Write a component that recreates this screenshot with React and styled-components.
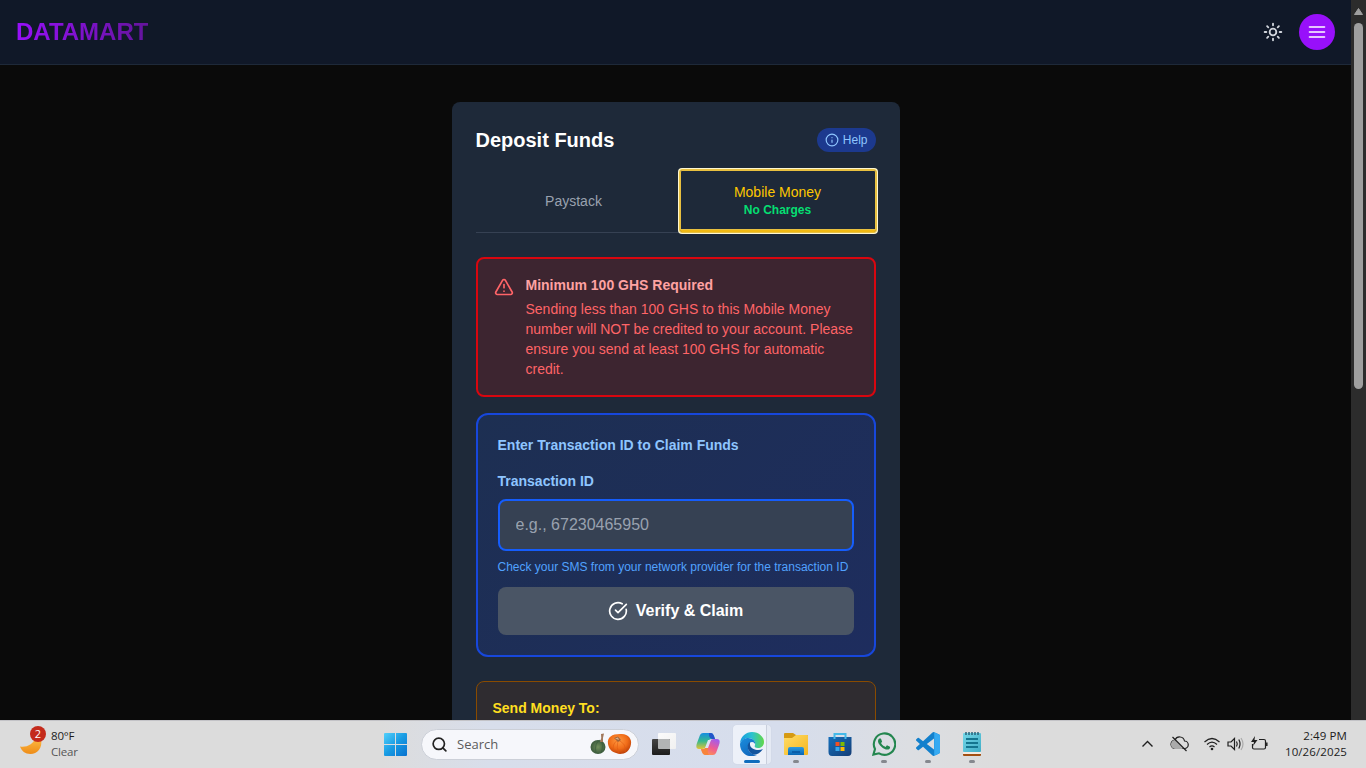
import React from 'react';
import styled, { createGlobalStyle } from 'styled-components';
import { Sun, Info, TriangleAlert, CircleCheckBig, Search } from 'lucide-react';

const GlobalStyle = createGlobalStyle`
  *, *::before, *::after { box-sizing: border-box; }
  body { margin: 0; overflow: hidden; background: #0a0a0a; font-family: "Liberation Sans", Arial, sans-serif; }
  h1, h2, h3, p { margin: 0; }
  button, input { font-family: inherit; }
`;

const Desktop = styled.div`
  display: flex;
  flex-direction: column;
  width: 1366px;
  height: 768px;
`;

const BrowserView = styled.div`
  display: flex;
  height: 720px;
  overflow: hidden;
`;

const Page = styled.div`
  width: 1351px;
  height: 720px;
  overflow: hidden;
  background: #0a0a0a;
`;

const Header = styled.header`
  display: flex;
  align-items: center;
  justify-content: space-between;
  height: 65px;
  padding: 0 16px;
  background: #101828;
  border-bottom: 1px solid #1e2939;
`;

const Brand = styled.h1`
  font-size: 24px;
  line-height: 32px;
  font-weight: 700;
  color: transparent;
  background: linear-gradient(90deg, #9810fa, #64149c);
  background-clip: text;
`;

const HeaderActions = styled.div`
  display: flex;
  align-items: center;
  gap: 16px;
`;

const ThemeToggle = styled.button`
  display: flex;
  padding: 0;
  border: 0;
  background: none;
  color: #d1d5dc;
`;

const MenuButton = styled.button`
  display: flex;
  align-items: center;
  justify-content: center;
  width: 36px;
  height: 36px;
  padding: 0;
  border: 0;
  border-radius: 50%;
  background: #9810fa;
  color: #fff;
`;

const ScrollTrack = styled.div`
  display: flex;
  flex-direction: column;
  align-items: center;
  width: 15px;
  height: 720px;
  padding-top: 8px;
  background: #2c2c2c;
`;

const ScrollThumb = styled.div`
  width: 9px;
  height: 366px;
  margin-top: 8px;
  border-radius: 5px;
  background: #9f9f9f;
`;

const Card = styled.main`
  width: 448px;
  height: 800px;
  margin: 37px auto 0;
  padding: 24px;
  border-radius: 8px;
  background: #1e2939;
`;

const CardHeader = styled.div`
  display: flex;
  align-items: center;
  justify-content: space-between;
  height: 28px;
  margin-bottom: 16px;
`;

const CardTitle = styled.h2`
  font-size: 20px;
  line-height: 28px;
  font-weight: 700;
  color: #fff;
`;

const HelpButton = styled.button`
  display: flex;
  align-items: center;
  gap: 4px;
  height: 24px;
  padding: 0 8px;
  border: 0;
  border-radius: 12px;
  background: #1c398e;
  color: #8ec5ff;
  font-size: 12px;
  line-height: 16px;
`;

const Tabs = styled.div`
  display: flex;
  gap: 8px;
  height: 63px;
  margin-bottom: 24px;
  border-bottom: 1px solid #364153;
`;

const Tab = styled.button`
  display: flex;
  flex: 1;
  flex-direction: column;
  align-items: center;
  justify-content: center;
  padding: 0;
  border: 0;
  border-bottom: ${(p) => (p.$active ? '2px solid #f0b913' : '0')};
  border-radius: ${(p) => (p.$active ? '2px' : '0')};
  outline: ${(p) => (p.$active ? '1px solid #e8c040' : 'none')};
  box-shadow: ${(p) => (p.$active ? '0 0 0 2px #fff7cf, inset 0 0 0 1px #e8c040' : 'none')};
  background: none;
  color: ${(p) => (p.$active ? '#fdc700' : '#99a1af')};
  font-size: 14px;
  line-height: 20px;
`;

const TabNote = styled.span`
  color: #05df72;
  font-size: 12px;
  line-height: 16px;
  font-weight: 700;
`;

const Alert = styled.section`
  display: flex;
  gap: 12px;
  height: 140px;
  margin-bottom: 16px;
  padding: 16px;
  border: 2px solid #d9060f;
  border-radius: 8px;
  background: #3d2530;
  color: #ff6467;
  font-size: 14px;
  line-height: 20px;
  svg { flex: none; margin-top: 2px; }
`;

const AlertTitle = styled.h3`
  margin-bottom: 4px;
  font-size: 14px;
  font-weight: 700;
  color: #ffa2a2;
`;

const ClaimPanel = styled.section`
  display: flex;
  flex-direction: column;
  height: 244px;
  margin-bottom: 24px;
  padding: 20px;
  border: 2px solid #1747dc;
  border-radius: 12px;
  background: linear-gradient(135deg, #1d2f52, #1e2d5e);
`;

const PanelTitle = styled.h3`
  font-size: 14px;
  line-height: 20px;
  font-weight: 700;
  color: ${(p) => p.$color};
`;

const FieldLabel = styled.label`
  margin: 16px 0 8px;
  font-size: 14px;
  line-height: 20px;
  font-weight: 700;
  color: #8ec5ff;
`;

const TextField = styled.input`
  width: 100%;
  height: 52px;
  padding: 0 16px;
  border: 2px solid #155dfc;
  border-radius: 8px;
  background: #364153;
  color: #fff;
  font-size: 16px;
  &::placeholder { color: #99a1af; opacity: 1; }
`;

const Hint = styled.p`
  margin: 8px 0 12px;
  font-size: 12px;
  line-height: 16px;
  color: #51a2ff;
  white-space: nowrap;
`;

const ClaimButton = styled.button`
  display: flex;
  align-items: center;
  justify-content: center;
  gap: 8px;
  height: 48px;
  border: 0;
  border-radius: 8px;
  background: #4a5565;
  color: #fff;
  font-size: 16px;
  font-weight: 700;
`;

const SendPanel = styled.section`
  height: 200px;
  padding: 16px;
  border: 1px solid #894b00;
  border-radius: 8px;
  background: #2f2c30;
`;

const Taskbar = styled.footer`
  display: grid;
  grid-template-columns: 375px 1fr 351px;
  height: 48px;
  border-top: 1px solid #c3c3c7;
  background: linear-gradient(90deg, #dcdcdc 0, #dcdcdc 380px, #d8deeb 490px, #d6ddec 780px, #dcdee2 910px, #dcdcdc 1000px);
  color: #1b1b1b;
  font-family: "Open Sans", "Noto Sans", sans-serif;
`;

const Weather = styled.div`
  display: flex;
  padding: 5px 0 0 19px;
  gap: 4px;
`;

const WeatherText = styled.div`
  padding-top: 2px;
  font-size: 11.5px;
  line-height: 16px;
  letter-spacing: -0.2px;
  span { display: block; color: #555; }
`;

const AppRow = styled.div`
  display: flex;
  align-items: flex-start;
`;

const StartButton = styled.div`
  width: 46px;
  padding: 12px 0 0 9px;
`;

const SearchBox = styled.div`
  display: flex;
  align-items: center;
  width: 218px;
  height: 31px;
  margin: 8px 6px 0 0;
  padding: 0 6px 0 9px;
  border: 1px solid #ccd0d8;
  border-radius: 16px;
  background: #f6f7fb;
  color: #222;
  font-size: 13px;
`;

const SearchText = styled.span`
  flex: 1;
  padding: 0 0 2px 9px;
  color: #5c5c5c;
`;

const AppSlot = styled.div`
  display: flex;
  flex-direction: column;
  align-items: center;
  width: 38px;
  height: 39px;
  margin: 4px 6px 0 0;
  padding-top: 7px;
  border-radius: 4px;
  background: ${(p) => (p.$active ? 'linear-gradient(90deg, #edf1f9 33px, #c9cfdc 33px, #c9cfdc 34px, #e5eaf4 34px)' : 'transparent')};
  box-shadow: ${(p) => (p.$active ? '0 0 1px #b9c1d0' : 'none')};
  svg { flex: none; }
`;

const RunMark = styled.span`
  width: ${(p) => (p.$active ? 16 : 6)}px;
  height: 3px;
  margin-top: 4px;
  border-radius: 2px;
  background: ${(p) => (p.$active ? '#0f6cbd' : '#85888e')};
`;

const Tray = styled.div`
  display: flex;
  justify-content: flex-end;
  gap: 13px;
  padding: 6px 19px 0 0;
`;

const Clock = styled.div`
  width: 66px;
  text-align: right;
  white-space: nowrap;
  font-size: 11.5px;
  line-height: 16px;
  letter-spacing: 0.1px;
  padding-top: 1px;
`;

const MenuIcon = () => (
  <svg width="20" height="20" viewBox="0 0 24 24" fill="none" stroke="currentColor" strokeWidth="2" strokeLinecap="round">
    <path d="M3 12H21M3 6H21M3 18H21" />
  </svg>
);

const MoonIcon = () => (
  <svg width="28" height="32" viewBox="0 0 28 32">
    <defs>
      <linearGradient id="moon" x1="0" y1="0" x2="0" y2="1">
        <stop offset="0" stopColor="#ffc14a" />
        <stop offset="1" stopColor="#ee8c18" />
      </linearGradient>
    </defs>
    <path d="M1 20.500C7 21.500 15 19 17 10L22 13C24 22 18 28 11.500 28C6 28 2.500 25 1 20.500Z" fill="url(#moon)" />
    <circle cx="19" cy="8" r="8" fill="#c42b1c" />
    <text x="19" y="12" textAnchor="middle" fontSize="11" fill="#fff">2</text>
  </svg>
);

const StartIcon = () => (
  <svg width="23" height="23" viewBox="0 0 23 23">
    <defs>
      <linearGradient id="win" x1="0" y1="0" x2="1" y2="1">
        <stop offset="0" stopColor="#52d0fb" />
        <stop offset="0.500" stopColor="#189be3" />
        <stop offset="1" stopColor="#0871cf" />
      </linearGradient>
    </defs>
    <path d="M1 0H11V11H0V1Q0 0 1 0ZM12 0H22Q23 0 23 1V11H12ZM0 12H11V23H1Q0 23 0 22ZM12 12H23V22Q23 23 22 23H12Z" fill="url(#win)" />
  </svg>
);

const PumpkinsIcon = () => (
  <svg width="42" height="24" viewBox="0 0 42 24">
    <defs>
      <radialGradient id="orangePumpkin" cx="0.45" cy="0.35" r="0.65">
        <stop offset="0" stopColor="#ff9b42" />
        <stop offset="0.600" stopColor="#f06c18" />
        <stop offset="1" stopColor="#bd4008" />
      </radialGradient>
      <radialGradient id="greenPumpkin">
        <stop offset="0" stopColor="#72905c" />
        <stop offset="1" stopColor="#3b5a3c" />
      </radialGradient>
    </defs>
    <ellipse cx="8" cy="14" rx="7.500" ry="7" fill="url(#greenPumpkin)" />
    <path d="M10 7Q4 10 6 20M11 7Q14 12 11 20" fill="none" stroke="#3a5c3c" strokeWidth="0.700" />
    <path d="M10 9Q12 5 11 1L14 0.500Q12.500 5 13 9Z" fill="#a1785b" />
    <path d="M18 11C17 4 22 1 30 1C38 0 42 6 41 11C40 18 35 21 30 21C23 20 19 17 18 11Z" fill="url(#orangePumpkin)" />
    <path d="M28 7Q21 11 24 19M28 7Q26 15 29 21M28 7Q37 11 35 19" fill="none" stroke="#e05a12" strokeWidth="0.600" />
    <path d="M24 5L28 3.500L31 7L28 9Z" fill="#a0643a" />
    <path d="M25 5.500L28 4.500L29 7Z" fill="#d9b08a" />
  </svg>
);

const TaskViewIcon = () => (
  <svg width="24" height="24" viewBox="0 0 24 24">
    <defs>
      <linearGradient id="paneLight" x1="0" y1="0" x2="1" y2="1">
        <stop stopColor="#fbfbfb" /><stop offset="1" stopColor="#f0f0f0" />
      </linearGradient>
      <linearGradient id="paneDark" x1="0" y1="0" x2="0" y2="1">
        <stop stopColor="#444" /><stop offset="1" stopColor="#1c1c1c" />
      </linearGradient>
    </defs>
    <rect x="6" y="1" width="18" height="16" rx="1" fill="url(#paneLight)" />
    <rect x="0" y="7" width="18" height="16" rx="1" fill="url(#paneDark)" />
    <path d="M6 7H17Q18 7 18 8V17H7Q6 17 6 16Z" fill="#b2b4b5" />
  </svg>
);

const CopilotIcon = () => (
  <svg width="24" height="24" viewBox="0 0 24 24">
    <defs>
      <linearGradient id="copA" x1="0" y1="0" x2="0" y2="1">
        <stop stopColor="#168ee2" /><stop offset="0.500" stopColor="#35b98f" /><stop offset="1" stopColor="#e4c335" />
      </linearGradient>
      <linearGradient id="copB" x1="0.700" y1="0" x2="0.200" y2="1">
        <stop stopColor="#a45bea" /><stop offset="0.500" stopColor="#ef5c91" /><stop offset="1" stopColor="#ff9b48" />
      </linearGradient>
    </defs>
    <path d="M7 1H15Q17 1 18 4L19 7H15Q13 7 12 10L10 15Q9 17 6 17H3Q-1 17 1 11L4 3Q5 1 7 1Z" fill="url(#copA)" />
    <path d="M17 23H9Q7 23 6 20L5 17H9Q11 17 12 14L14 9Q15 7 18 7H21Q25 7 23 13L20 21Q19 23 17 23Z" fill="url(#copB)" />
    <path d="M13 1H15Q17 1 18 4L19 7H16Q14 7 13 4Z" fill="#2355c9" />
    <path d="M9 16H12Q11 21 13 23H9Q7 23 6 20L5 17Q8 18 9 16Z" fill="#f8843c" />
    <path d="M12 8H15L12 16H9Z" fill="#dce3f3" />
  </svg>
);

const EdgeIcon = () => (
  <svg width="24" height="24" viewBox="0 0 24 24">
    <defs>
      <linearGradient id="edgeTop" x1="0" y1="0.500" x2="1" y2="0.500">
        <stop stopColor="#169ae1" /><stop offset="0.500" stopColor="#2cc2d0" /><stop offset="1" stopColor="#62d847" />
      </linearGradient>
      <linearGradient id="edgeSide" x1="0" y1="0" x2="0.600" y2="1">
        <stop stopColor="#1b8ede" /><stop offset="1" stopColor="#1167bc" />
      </linearGradient>
    </defs>
    <path d="M0 11C1 4 6 0 12 0C19 0 24 5 24 10C24 14 21 16 18 16C15 16 14 15 15 13C16 10 13 6 9 6C5 6 2 8 0 11Z" fill="url(#edgeTop)" />
    <path d="M0 12C1 8 5 6 8 6C13 6 16 10 15 12C14 9 9 9 8 14C7 20 13 23 17 23C8 27 0 21 0 12Z" fill="url(#edgeSide)" />
    <path d="M10 10C7 12 7 16 9 19C12 24 18 24 23 17C19 19 11 18 10 13Z" fill="#12549e" />
  </svg>
);

const FolderIcon = () => (
  <svg width="24" height="24" viewBox="0 0 24 24">
    <defs>
      <linearGradient id="folder" x1="0" y1="0" x2="1" y2="1">
        <stop stopColor="#ffdc66" /><stop offset="1" stopColor="#f4b51f" />
      </linearGradient>
      <linearGradient id="folderTray" x1="0" y1="0" x2="0" y2="1">
        <stop stopColor="#2b9be1" /><stop offset="1" stopColor="#0865b4" />
      </linearGradient>
    </defs>
    <path d="M0 2Q0 1 1 1H9L12 3H23Q24 3 24 4V10H0Z" fill="#d69a12" />
    <path d="M0 6H8L12 3H23Q24 3 24 4V22Q24 23 23 23H1Q0 23 0 22Z" fill="url(#folder)" />
    <path d="M4 23V17Q4 15 6 15H18Q20 15 20 17V23Z" fill="url(#folderTray)" />
    <path d="M8 20H16" stroke="#0755a0" strokeWidth="1.500" />
  </svg>
);

const StoreIcon = () => (
  <svg width="24" height="24" viewBox="0 0 24 24">
    <defs>
      <linearGradient id="store" x1="0" y1="0" x2="1" y2="1">
        <stop stopColor="#146fbc" /><stop offset="1" stopColor="#153d75" />
      </linearGradient>
    </defs>
    <path d="M0.500 5H23.500V20Q23.500 24 20 24H4Q0.500 24 0.500 20Z" fill="url(#store)" />
    <path d="M6.500 7V2H17.500V7" fill="none" stroke="#44b9e8" strokeWidth="2" />
    <path d="M7.500 10H11.500V14H7.500Z" fill="#f25022" />
    <path d="M12.500 10H16.500V14H12.500Z" fill="#7fba00" />
    <path d="M7.500 15H11.500V19H7.500Z" fill="#36a7ec" />
    <path d="M12.500 15H16.500V19H12.500Z" fill="#ffb900" />
  </svg>
);

const WhatsAppIcon = () => (
  <svg width="24" height="24" viewBox="0 0 24 24">
    <path fill="#23864f" d="M17.472 14.382c-.297-.149-1.758-.867-2.030-.967-.273-.099-.471-.148-.670.150-.197.297-.767.966-.940 1.164-.173.199-.347.223-.644.075-.297-.150-1.255-.463-2.390-1.475-.883-.788-1.480-1.761-1.653-2.059-.173-.297-.018-.458.130-.606.134-.133.298-.347.446-.520.149-.174.198-.298.298-.497.099-.198.050-.371-.025-.520-.075-.149-.669-1.612-.916-2.207-.242-.579-.487-.500-.669-.510-.173-.008-.371-.010-.570-.010-.198 0-.520.074-.792.372-.272.297-1.040 1.016-1.040 2.479 0 1.462 1.065 2.875 1.213 3.074.149.198 2.096 3.200 5.077 4.487.709.306 1.262.489 1.694.625.712.227 1.360.195 1.871.118.571-.085 1.758-.719 2.006-1.413.248-.694.248-1.289.173-1.413-.074-.124-.272-.198-.570-.347" />
    <path d="M1.400 22.600L3 17A10.700 10.700 0 1 1 7 21.300Z" fill="none" stroke="#23864f" strokeWidth="2.100" />
  </svg>
);

const CodeIcon = () => (
  <svg width="24" height="24" viewBox="0 0 24 24">
    <path fill="#1380cc" d="M23.150 2.587L18.210.210a1.494 1.494 0 0 0-1.705.290l-9.460 8.630-4.120-3.128a.999.999 0 0 0-1.276.057L.327 7.261A1 1 0 0 0 .326 8.740L3.899 12 .326 15.260a1 1 0 0 0 .001 1.479L1.650 17.940a.999.999 0 0 0 1.276.057l4.120-3.128 9.460 8.630a1.492 1.492 0 0 0 1.704.290l4.942-2.377A1.500 1.500 0 0 0 24 20.060V3.939a1.500 1.500 0 0 0-.850-1.352zm-5.146 14.861L10.826 12l7.178-5.448v10.896z" />
    <path d="M18.200 0.200L23.150 2.590Q24 3 24 3.940V20.060Q24 21 23.150 21.420L18.200 23.800Z" fill="#35aaf2" />
  </svg>
);

const NotepadIcon = () => (
  <svg width="20" height="24" viewBox="0 0 20 24">
    <defs>
      <linearGradient id="note" x1="0" y1="0" x2="1" y2="1">
        <stop stopColor="#74d7e8" /><stop offset="1" stopColor="#40adc6" />
      </linearGradient>
    </defs>
    <rect x="1" y="1" width="18" height="19" rx="1" fill="url(#note)" />
    <path d="M4 0V3M7 0V3M10 0V3M13 0V3M16 0V3" stroke="#27637b" strokeWidth="1.500" />
    <path d="M4 7H16M4 11H16M4 15H16" stroke="#14758f" strokeWidth="2" />
    <path d="M1 20H19V22H1Z" fill="#f2ebe3" />
    <path d="M1 22H19V23Q19 24 18 24H2Q1 24 1 23Z" fill="#a24f12" />
  </svg>
);

const TrayIcons = () => (
  <svg width="130" height="34" viewBox="0 0 130 34" fill="none" stroke="#202020" strokeWidth="1.200">
    <path d="M4.500 19.500L9.500 14.500L14.500 19.500" strokeWidth="1.400" />
    <path d="M37.500 21.500H46.500A3.700 3.700 0 0 0 46.500 14A5 5 0 0 0 37 13A4.200 4.200 0 0 0 37.500 21.500Z" />
    <path d="M37 13L45 22H38A4.200 4.200 0 0 1 37 13Z" fill="#aaa" stroke="none" />
    <path d="M34.500 10L48.500 24" />
    <path d="M66.500 15Q74 8 81.500 15M69 17.500Q74 12.700 79 17.500M71.500 20Q74 17.700 76.500 20" />
    <circle cx="74" cy="22" r="1.300" fill="#202020" stroke="none" />
    <path d="M90 15H93L96.500 11.500V22.500L93 19H90Z" />
    <path d="M98.500 14.500Q100 17 98.500 19.500M100.800 12.500Q103.300 17 100.800 21.500" />
    <path d="M103 11Q107 17 103 23" stroke="#aaa" />
    <path d="M121 12.500H126Q127.500 12.500 127.500 14V20.500Q127.500 22 126 22H116Q114.500 22 114.500 20.500V17" />
    <path d="M128.800 15.500V19" strokeWidth="1.500" />
    <path d="M117 9L113 15H116L115 19L119.500 13H116.500Z" fill="#202020" stroke="none" />
  </svg>
);

const apps = [
  { name: 'tasks', Icon: TaskViewIcon },
  { name: 'copilot', Icon: CopilotIcon },
  { name: 'edge', Icon: EdgeIcon, running: true, active: true },
  { name: 'explorer', Icon: FolderIcon, running: true },
  { name: 'store', Icon: StoreIcon },
  { name: 'whatsapp', Icon: WhatsAppIcon, running: true },
  { name: 'code', Icon: CodeIcon, running: true },
  { name: 'notepad', Icon: NotepadIcon, running: true },
];

export default function App() {
  return (
    <Desktop>
      <GlobalStyle />
      <BrowserView>
        <Page>
          <Header>
            <Brand>DATAMART</Brand>
            <HeaderActions>
              <ThemeToggle aria-label="Toggle theme"><Sun size={20} strokeWidth={2.200} /></ThemeToggle>
              <MenuButton aria-label="Menu"><MenuIcon /></MenuButton>
            </HeaderActions>
          </Header>
          <Card>
            <CardHeader>
              <CardTitle>Deposit Funds</CardTitle>
              <HelpButton><Info size={14} />Help</HelpButton>
            </CardHeader>
            <Tabs>
              <Tab>Paystack</Tab>
              <Tab $active>Mobile Money<TabNote>No Charges</TabNote></Tab>
            </Tabs>
            <Alert>
              <TriangleAlert size={20} />
              <div>
                <AlertTitle>Minimum 100 GHS Required</AlertTitle>
                <p>Sending less than 100 GHS to this Mobile Money number will NOT be credited to your account. Please ensure you send at least 100 GHS for automatic credit.</p>
              </div>
            </Alert>
            <ClaimPanel>
              <PanelTitle $color="#8ec5ff">Enter Transaction ID to Claim Funds</PanelTitle>
              <FieldLabel htmlFor="transaction">Transaction ID</FieldLabel>
              <TextField id="transaction" placeholder="e.g., 67230465950" />
              <Hint>Check your SMS from your network provider for the transaction ID</Hint>
              <ClaimButton><CircleCheckBig size={20} />Verify &amp; Claim</ClaimButton>
            </ClaimPanel>
            <SendPanel>
              <PanelTitle $color="#ffdf20">Send Money To:</PanelTitle>
            </SendPanel>
          </Card>
        </Page>
        <ScrollTrack>
          <svg width="9" height="7" viewBox="0 0 9 7"><path d="M4.500 0.500L8.500 6.500H0.500Z" fill="#9f9f9f" stroke="#9f9f9f" strokeLinejoin="round" /></svg>
          <ScrollThumb />
        </ScrollTrack>
      </BrowserView>
      <Taskbar>
        <Weather>
          <MoonIcon />
          <WeatherText>80°F<span>Clear</span></WeatherText>
        </Weather>
        <AppRow>
          <StartButton><StartIcon /></StartButton>
          <SearchBox>
            <Search size={17} strokeWidth={2.400} />
            <SearchText>Search</SearchText>
            <PumpkinsIcon />
          </SearchBox>
          {apps.map(({ name, Icon, running, active }) => (
            <AppSlot key={name} $active={active}>
              <Icon />
              {running && <RunMark $active={active} />}
            </AppSlot>
          ))}
        </AppRow>
        <Tray>
          <TrayIcons />
          <Clock>2:49 PM<br />10/26/2025</Clock>
        </Tray>
      </Taskbar>
    </Desktop>
  );
}
